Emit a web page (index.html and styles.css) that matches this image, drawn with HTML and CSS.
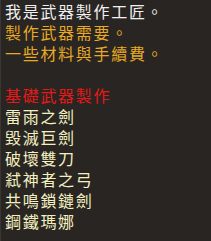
FILE: index.html
```html
<!DOCTYPE html>
<html lang="zh-Hant">
<head>
<meta charset="utf-8">
<link rel="stylesheet" href="styles.css">
</head>
<body>
<div class="dialog">
  <div class="line intro">我是武器製作工匠。</div>
  <div class="line note">製作武器需要。</div>
  <div class="line note">一些材料與手續費。</div>
  <div class="line blank"></div>
  <div class="line heading">基礎武器製作</div>
  <ul class="items">
    <li class="line item">雷雨之劍</li>
    <li class="line item">毀滅巨劍</li>
    <li class="line item">破壞雙刀</li>
    <li class="line item">弒神者之弓</li>
    <li class="line item">共鳴鎖鏈劍</li>
    <li class="line item">鋼鐵瑪娜</li>
  </ul>
</div>
</body>
</html>
```

FILE: styles.css
```css
html, body {
  margin: 0;
  padding: 0;
  width: 211px;
  height: 241px;
  overflow: hidden;
  background: #282522;
}
.dialog {
  box-sizing: border-box;
  width: 211px;
  height: 241px;
  padding: 1px 0 0 4px;
  border-left: 1px solid #3a3733;
  font-family: "Noto Sans CJK TC", "Noto Sans CJK SC", sans-serif;
  font-size: 16px;
  letter-spacing: 1.7px;
  display: flex;
  flex-direction: column;
}
.line {
  height: 21px;
  line-height: 21px;
  white-space: nowrap;
}
.intro { color: #f0f0f0; }
.note { color: #e8aa22; }
.heading { color: #e81818; }
.items {
  list-style: none;
  margin: 0;
  padding: 0;
  display: flex;
  flex-direction: column;
}
.item { color: #f4f0c0; }
```
